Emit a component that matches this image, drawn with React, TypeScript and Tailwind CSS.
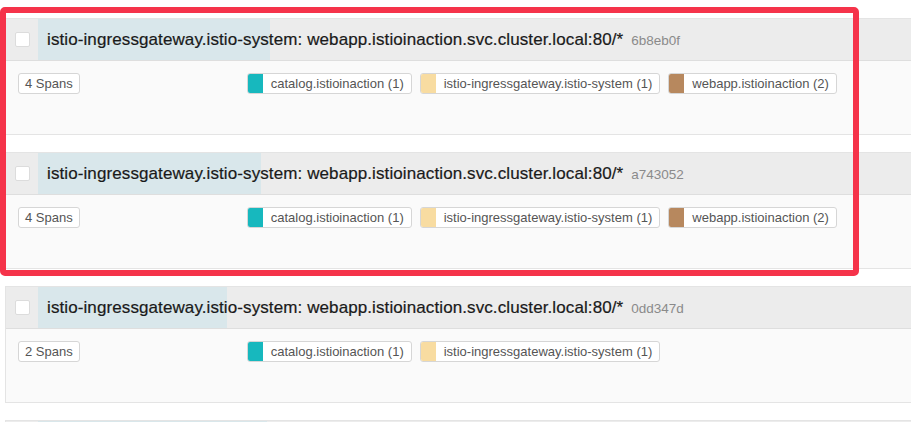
import React from "react";

interface Service {
  name: string;
  count: number;
  color: string;
}

interface Trace {
  id: string;
  spans: number;
  barWidth: string;
  services: Service[];
}

const title =
  "istio-ingressgateway.istio-system: webapp.istioinaction.svc.cluster.local:80/*";

const catalog = { name: "catalog.istioinaction", color: "bg-[#17b8be]" };
const gateway = { name: "istio-ingressgateway.istio-system", color: "bg-[#f8dca1]" };
const webapp = { name: "webapp.istioinaction", color: "bg-[#b7885e]" };

const traces: Trace[] = [
  {
    id: "6b8eb0f",
    spans: 4,
    barWidth: "w-[232px]",
    services: [
      { ...catalog, count: 1 },
      { ...gateway, count: 1 },
      { ...webapp, count: 2 },
    ],
  },
  {
    id: "a743052",
    spans: 4,
    barWidth: "w-[223px]",
    services: [
      { ...catalog, count: 1 },
      { ...gateway, count: 1 },
      { ...webapp, count: 2 },
    ],
  },
  {
    id: "0dd347d",
    spans: 2,
    barWidth: "w-[189px]",
    services: [
      { ...catalog, count: 1 },
      { ...gateway, count: 1 },
    ],
  },
];

const TraceCard: React.FC<{ trace: Trace }> = ({ trace }) => (
  <div className="w-[940px] shrink-0 border border-[#e4e4e4] bg-[#fafafa]">
    {/* Header */}
    <div className="relative flex h-[41px] items-center bg-[#ececec]">
      <div className={`absolute left-[32px] top-0 h-full bg-[#d9e7eb] ${trace.barWidth}`} />
      <div className="relative flex w-[32px] shrink-0 justify-center">
        <div className="h-[15px] w-[15px] rounded-[2px] border border-[#dcdcdc] bg-white" />
      </div>
      <div className="relative flex items-baseline pl-[9px]">
        <span className="text-[17px] tracking-[0.1px] text-[#1a1a1a] [-webkit-text-stroke:0.2px_#1a1a1a]">
          {title}
        </span>
        <span className="ml-[8px] text-[13.5px] text-[#8a8a8a]">{trace.id}</span>
      </div>
    </div>
    {/* Body */}
    <div className="flex h-[74px] items-start border-t border-[#dedede] pt-[12px]">
      <div className="ml-[12px] flex h-[21px] items-center rounded-[3px] border border-[#d6d6d6] bg-white px-[6px] text-[13px] text-[#555]">
        {trace.spans} Spans
      </div>
      <div className="ml-[167px] flex gap-[8px]">
        {trace.services.map((s) => (
          <div
            key={s.name}
            className="flex h-[21px] items-center overflow-hidden rounded-[3px] border border-[#d6d6d6] bg-white text-[13px] text-[#555]"
          >
            <div className={`h-full w-[15px] ${s.color}`} />
            <span className="pl-[8px] pr-[7px]">
              {s.name} ({s.count})
            </span>
          </div>
        ))}
      </div>
    </div>
  </div>
);

export default function App() {
  return (
    <div
      className="relative h-[422px] w-[911px] overflow-hidden bg-white"
      style={{ fontFamily: '"Liberation Sans", Arial, sans-serif' }}
    >
      <div className="flex flex-col gap-[17px] pl-[5px] pt-[18px]">
        {traces.map((t) => (
          <TraceCard key={t.id} trace={t} />
        ))}
        {/* next trace, only its header edge is in view */}
        <div className="relative h-[41px] w-[940px] shrink-0 border border-[#e4e4e4] bg-[#ececec]">
          <div className="absolute left-[32px] top-0 h-full w-[229px] bg-[#d9e7eb]" />
        </div>
      </div>
      {/* highlight box */}
      <div className="pointer-events-none absolute left-0 top-[7px] h-[269px] w-[859px] rounded-[5px] border-[6px] border-[#f5334a]" />
    </div>
  );
}
